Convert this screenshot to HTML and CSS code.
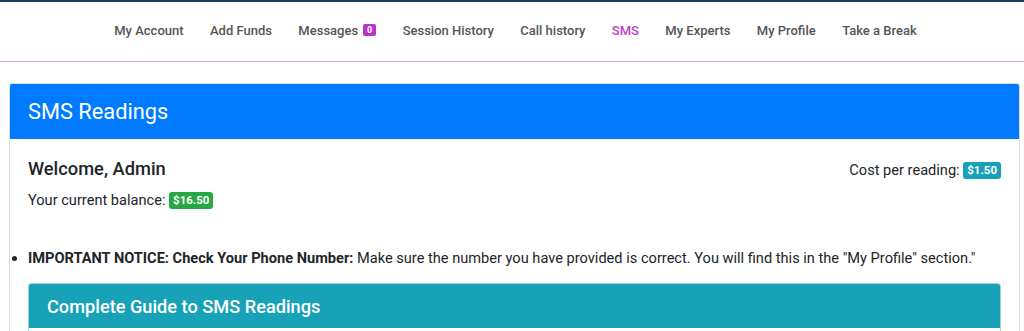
FILE: index.html
```html
<!DOCTYPE html>
<html>
<head>
<meta charset="utf-8">
<link rel="stylesheet" href="styles.css">
</head>
<body>
<header class="topbar">
  <nav class="nav">
    <a class="nav-link" href="#">My Account</a>
    <a class="nav-link" href="#">Add Funds</a>
    <a class="nav-link" href="#">Messages <span class="nav-badge">0</span></a>
    <a class="nav-link" href="#">Session History</a>
    <a class="nav-link" href="#">Call history</a>
    <a class="nav-link active" href="#">SMS</a>
    <a class="nav-link" href="#">My Experts</a>
    <a class="nav-link" href="#">My Profile</a>
    <a class="nav-link" href="#">Take a Break</a>
  </nav>
</header>
<main class="page">
  <section class="card">
    <div class="card-header primary">
      <h2 class="card-title">SMS Readings</h2>
    </div>
    <div class="card-body">
      <div class="info-row">
        <div class="info-left">
          <h3 class="welcome">Welcome, Admin</h3>
          <p class="balance">Your current balance: <span class="badge green">$16.50</span></p>
        </div>
        <div class="info-right">
          <p class="cost">Cost per reading: <span class="badge teal">$1.50</span></p>
        </div>
      </div>
      <ul class="notice-list">
        <li><strong>IMPORTANT NOTICE: Check Your Phone Number:</strong> Make sure the number you have provided is correct. You will find this in the "My Profile" section."</li>
      </ul>
      <section class="card inner">
        <div class="card-header info">
          <h3 class="inner-title">Complete Guide to SMS Readings</h3>
        </div>
        <div class="card-body inner-body"></div>
      </section>
    </div>
  </section>
</main>
</body>
</html>
```
FILE: styles.css
```css
* { box-sizing: border-box; }
html, body { margin: 0; padding: 0; }
body {
  font-family: Roboto, "Liberation Sans", Arial, sans-serif;
  color: #212529;
  background: #fff;
  font-size: 14.6px;
  overflow: hidden;
}
.topbar {
  border-top: 2px solid #1d3f5e;
  border-bottom: 1px solid #dc9adc;
  height: 62px;
}
.nav {
  display: flex;
  justify-content: center;
  align-items: center;
  height: 57px;
  padding-left: 7px;
}
.nav-link {
  font-size: 13px;
  font-weight: 500;
  color: #555;
  text-decoration: none;
  padding: 0 13.2px;
  display: flex;
  align-items: center;
  gap: 5px;
}
.nav-link.active { color: #c23cc2; }
.nav-badge {
  display: inline-block;
  background: #b733c4;
  color: #fff;
  font-size: 9px;
  font-weight: 700;
  line-height: 12px;
  padding: 0 4px;
  border-radius: 2px;
  position: relative;
  top: -1px;
}
.page {
  padding: 21px 4px 0 9px;
}
.card {
  border: 1px solid #dcdcdc;
  border-radius: 3px;
  background: #fff;
}
.card-header {
  border-radius: 2px 2px 0 0;
}
.card-header.primary {
  background: #007bff;
  height: 55px;
  display: flex;
  align-items: center;
  padding: 0 18px;
}
.card-title {
  margin: 0;
  color: #fff;
  font-size: 21.8px;
  font-weight: 400;
}
.card-body {
  padding: 19px 18px 0 18px;
}
.info-row {
  display: flex;
  justify-content: space-between;
  align-items: flex-start;
}
.welcome {
  margin: 0;
  font-size: 18.3px;
  font-weight: 500;
  line-height: 22px;
}
.balance {
  margin: 10px 0 0 0;
  line-height: 21px;
}
.cost {
  margin: 2px 0 0 0;
  line-height: 21px;
}
.badge {
  display: inline-block;
  color: #fff;
  font-size: 11.5px;
  font-weight: 700;
  line-height: 11px;
  padding: 3px 4px;
  border-radius: 3px;
  vertical-align: 1px;
}
.badge.green { background: #28a745; }
.badge.teal { background: #17a2b8; }
.notice-list {
  margin: 37px 0 0 0;
  padding: 0;
  list-style: disc;
}
.notice-list li {
  line-height: 21px;
}
.card.inner {
  margin-top: 14px;
  border-color: #9ed7e0;
}
.card-header.info {
  background: #17a2b8;
  height: 44px;
  display: flex;
  align-items: center;
  padding: 0 18px;
}
.inner-title {
  margin: 0;
  color: #fff;
  font-size: 18.2px;
  font-weight: 500;
}
.inner-body {
  height: 40px;
}
```
